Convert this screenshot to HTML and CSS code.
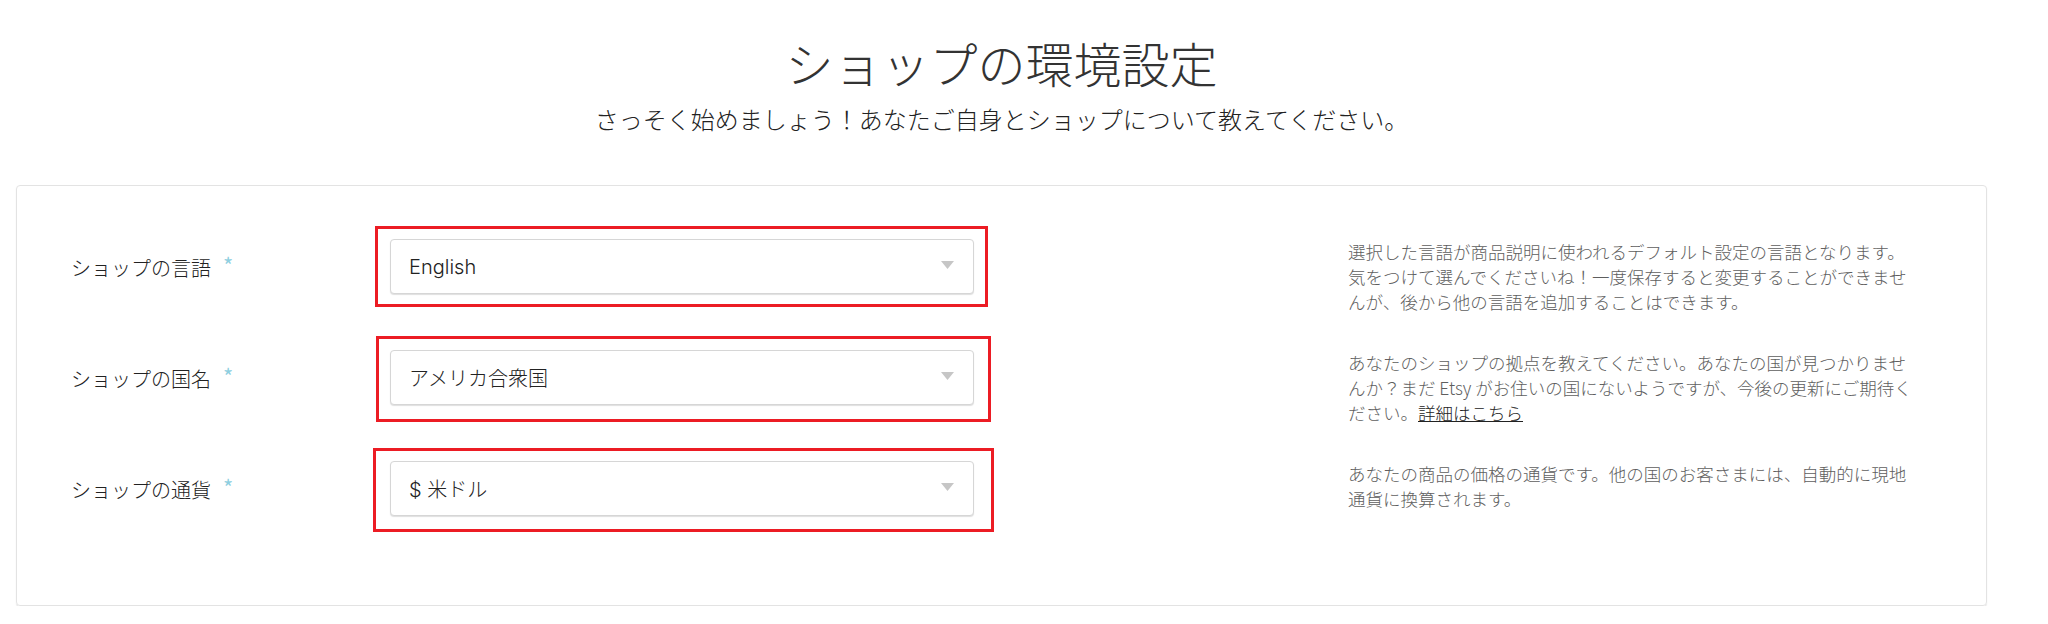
FILE: index.html
```html
<!DOCTYPE html>
<html lang="ja">
<head>
<meta charset="utf-8">
<title>ショップの環境設定</title>
<link rel="stylesheet" href="styles.css">
</head>
<body>
<div class="page">
  <header class="intro">
    <h1 class="title">ショップの環境設定</h1>
    <p class="lead">さっそく始めましょう！あなたご自身とショップについて教えてください。</p>
  </header>

  <section class="card">
    <div class="row">
      <div class="label">ショップの言語<span class="req">*</span></div>
      <div class="field">
        <div class="select"><span>English</span><svg class="caret" width="13" height="8" viewBox="0 0 13 8"><path d="M0 0H13L6.5 8Z"/></svg></div>
        <div class="mark mark-1"></div>
      </div>
      <p class="help">選択した言語が商品説明に使われるデフォルト設定の言語となります。<br>気をつけて選んでくださいね！一度保存すると変更することができませ<br>んが、後から他の言語を追加することはできます。</p>
    </div>

    <div class="row">
      <div class="label">ショップの国名<span class="req">*</span></div>
      <div class="field">
        <div class="select"><span>アメリカ合衆国</span><svg class="caret" width="13" height="8" viewBox="0 0 13 8"><path d="M0 0H13L6.5 8Z"/></svg></div>
        <div class="mark mark-2"></div>
      </div>
      <p class="help">あなたのショップの拠点を教えてください。あなたの国が見つかりませ<br>んか？まだ Etsy がお住いの国にないようですが、今後の更新にご期待く<br>ださい。<a href="#" class="more">詳細はこちら</a></p>
    </div>

    <div class="row">
      <div class="label">ショップの通貨<span class="req">*</span></div>
      <div class="field">
        <div class="select"><span>$ 米ドル</span><svg class="caret" width="13" height="8" viewBox="0 0 13 8"><path d="M0 0H13L6.5 8Z"/></svg></div>
        <div class="mark mark-3"></div>
      </div>
      <p class="help">あなたの商品の価格の通貨です。他の国のお客さまには、自動的に現地<br>通貨に換算されます。</p>
    </div>
  </section>
</div>
</body>
</html>
```

FILE: styles.css
```css
* {
  box-sizing: border-box;
}

body {
  margin: 0;
  background: #fff;
  color: #222;
  font-family: Inter, "Noto Sans CJK JP", sans-serif;
}

.page {
  margin-left: 16px;
  width: 1971px;
}

.intro {
  text-align: center;
}

.title {
  margin: 32px 0 0;
  font-size: 48px;
  line-height: 60px;
  font-weight: 200;
  color: #333;
  font-family: "Noto Sans CJK JP", sans-serif;
}

.lead {
  margin: 11px 0 0;
  font-size: 24px;
  line-height: 32px;
  font-weight: 300;
  color: #222;
  font-family: "Noto Sans CJK JP", sans-serif;
}

.card {
  margin-top: 50px;
  border: 1px solid #e3e3e3;
  border-radius: 4px;
  box-shadow: 0 1px 1px rgba(0, 0, 0, 0.12);
  padding: 53px 0 33px 54px;
}

.row {
  display: flex;
  align-items: flex-start;
  height: 111px;
}

.label {
  width: 319px;
  flex: none;
  font-size: 20px;
  line-height: 55px;
  font-weight: 300;
  color: #222;
  font-family: "Noto Sans CJK JP", sans-serif;
}

.req {
  margin-left: 12px;
  color: #8fcfe0;
  font-size: 22px;
  font-weight: 400;
  position: relative;
  top: -2px;
}

.field {
  position: relative;
  width: 584px;
  flex: none;
}

.select {
  height: 55px;
  border: 1px solid #d6d6d6;
  border-radius: 4px;
  box-shadow: 0 1px 1px rgba(0, 0, 0, 0.13);
  background: #fff;
  display: flex;
  align-items: center;
  justify-content: space-between;
  padding: 0 19px 0 18px;
  font-size: 20px;
  font-weight: 300;
  color: #222;
}

.caret {
  fill: #c6c6c6;
  margin-bottom: 4px;
}

.mark {
  position: absolute;
  border: 3px solid #ec1c24;
  pointer-events: none;
}

.mark-1 {
  top: -13px;
  bottom: -13px;
  left: -15px;
  right: -14px;
}

.mark-2 {
  top: -14px;
  bottom: -17px;
  left: -14px;
  right: -17px;
}

.mark-3 {
  top: -13px;
  bottom: -16px;
  left: -17px;
  right: -20px;
}

.help {
  margin: 0 0 0 374px;
  font-size: 17.5px;
  line-height: 25px;
  font-weight: 300;
  color: #5e5e5e;
  white-space: nowrap;
  font-family: "Noto Sans CJK JP", sans-serif;
}

.more {
  color: #222;
  text-decoration: underline;
}
```
